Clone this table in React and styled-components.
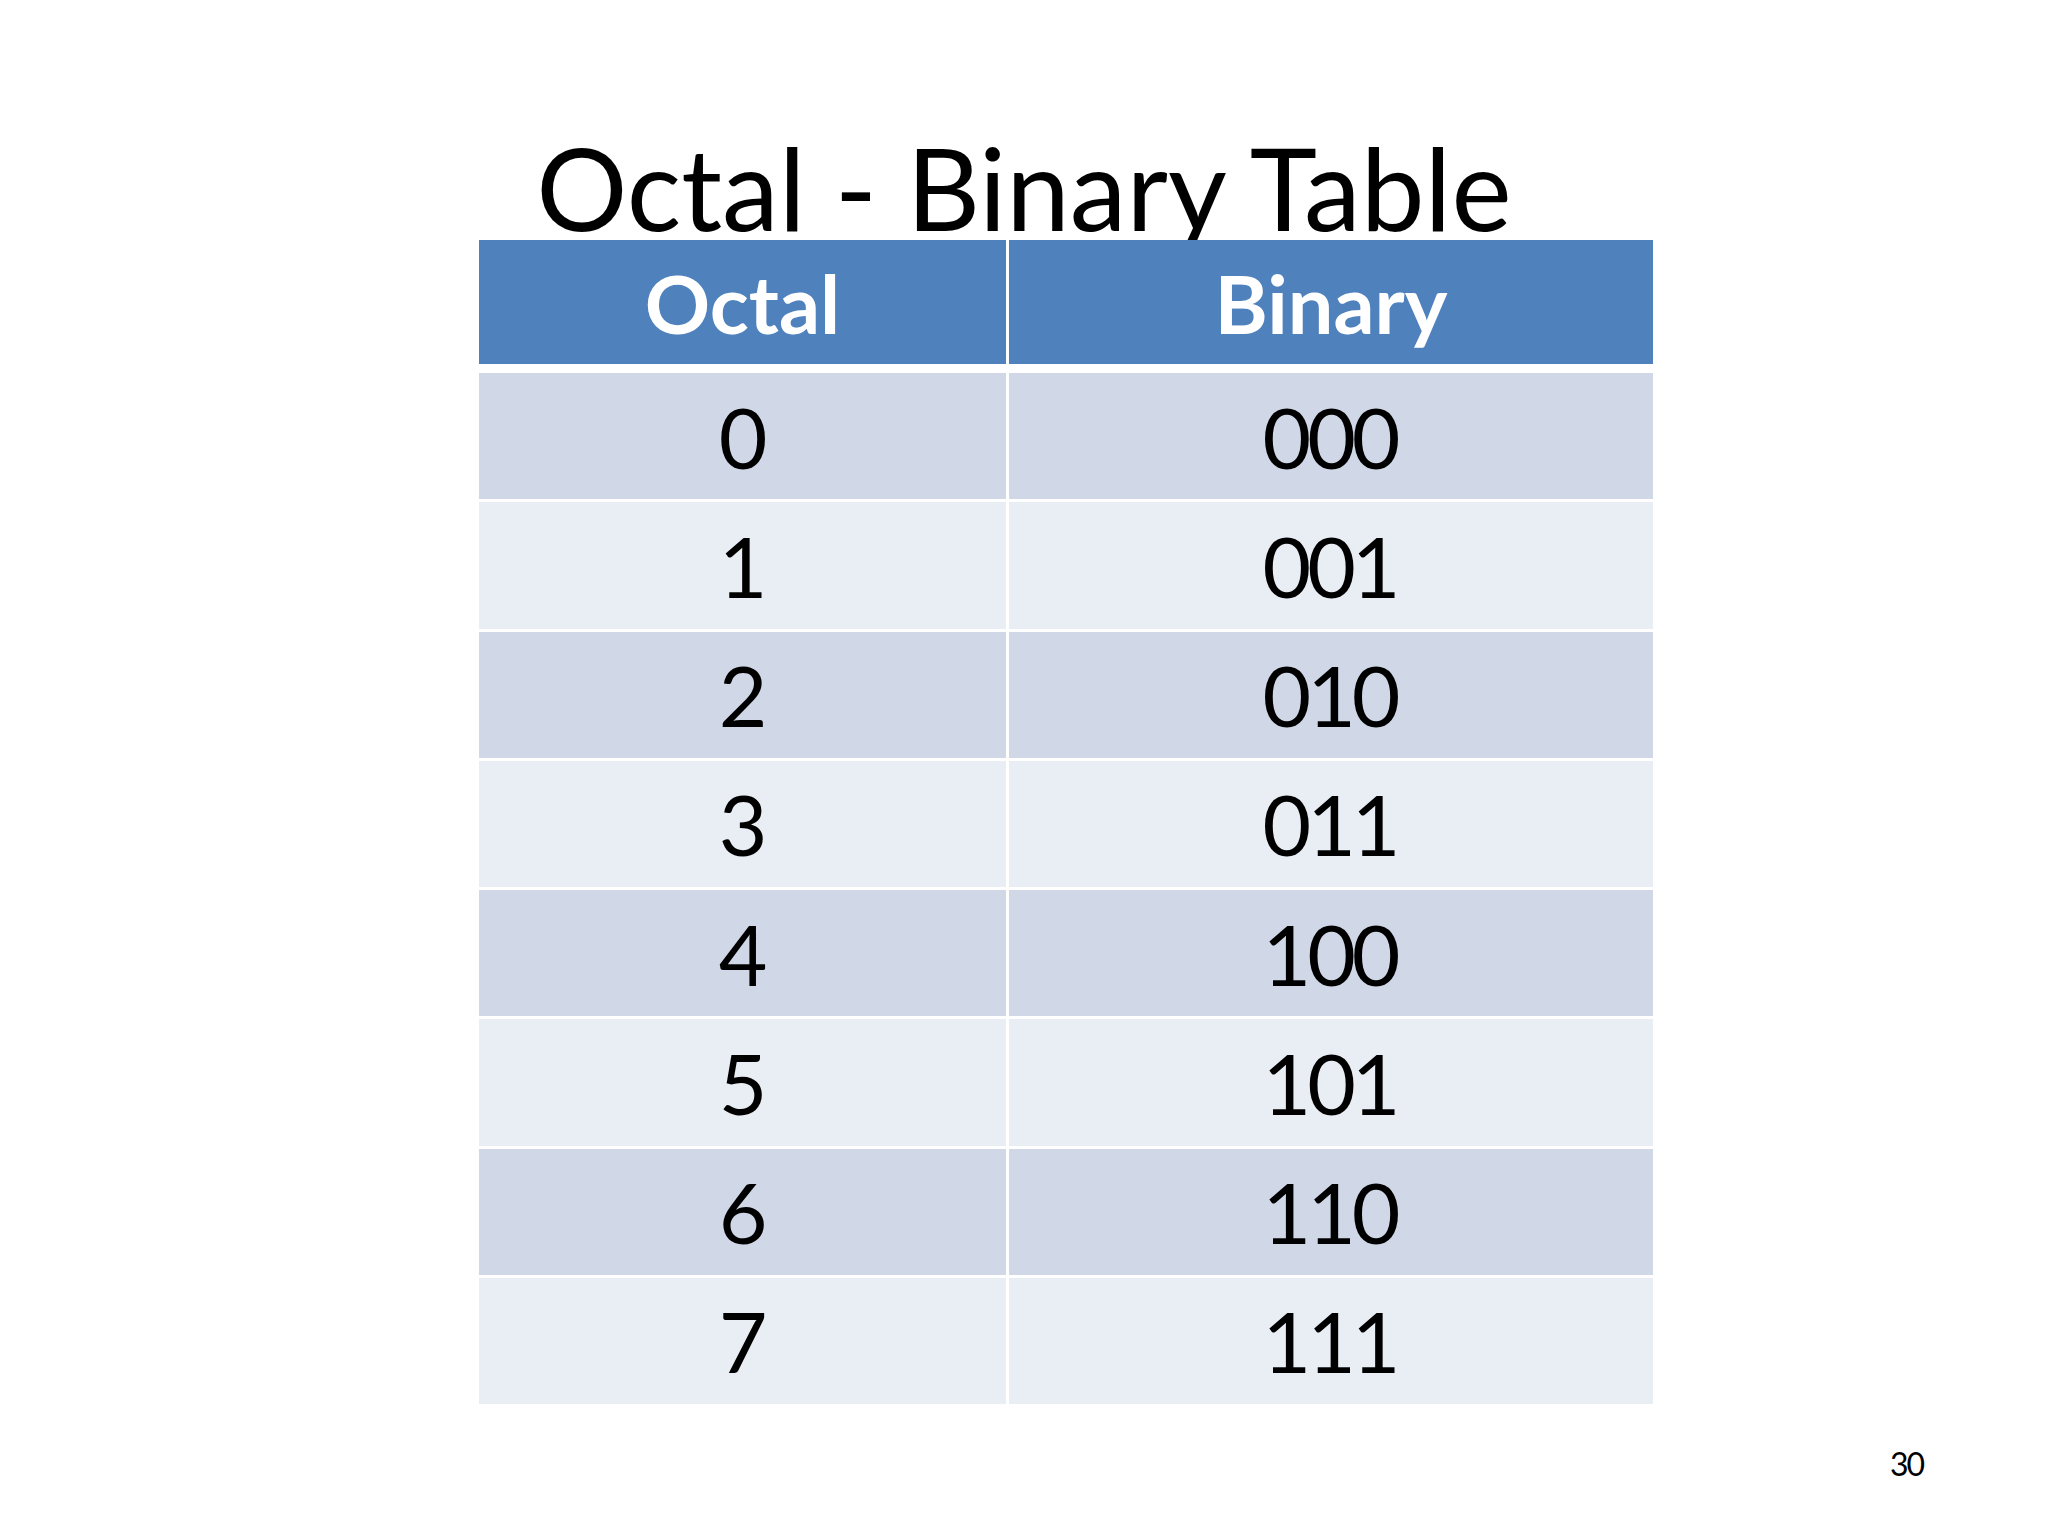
import styled, { createGlobalStyle } from "styled-components";

const GlobalStyle = createGlobalStyle`
  html, body {
    margin: 0;
    padding: 0;
    background: #ffffff;
  }
  body {
    font-family: Lato, "Open Sans", "Liberation Sans", sans-serif;
    color: #000000;
  }
`;

const Slide = styled.div`
  width: 2048px;
  height: 1536px;
  background: #ffffff;
  display: flex;
  flex-direction: column;
  overflow: hidden;
`;

const Titulo = styled.h1`
  margin: 134px 0 0 0;
  font-size: 114px;
  font-weight: normal;
  line-height: 106px;
  text-align: center;
`;

const Tabla = styled.div`
  margin-left: 479px;
  width: 1174px;
  display: grid;
  grid-template-columns: 527px 644px;
  column-gap: 3px;
  row-gap: 3px;
  background: #ffffff;
`;

const Cabecera = styled.div`
  height: 124px;
  margin-bottom: 6px;
  background: #4f81bd;
  color: #ffffff;
  font-size: 81px;
  font-weight: bold;
  letter-spacing: 0;
  display: flex;
  align-items: center;
  justify-content: center;
`;

const Celda = styled.div`
  height: 126.25px;
  background: ${(p) => (p.$par ? "#d0d8e8" : "#e9edf4")};
  font-size: 84px;
  letter-spacing: -4px;
  display: flex;
  align-items: center;
  justify-content: center;
  padding-right: 3px;
  box-sizing: border-box;
`;

const Pie = styled.div`
  margin-top: 40px;
  padding-right: 125px;
  text-align: right;
  font-size: 32px;
  letter-spacing: -2px;
`;

const filas = [
  ["0", "000"],
  ["1", "001"],
  ["2", "010"],
  ["3", "011"],
  ["4", "100"],
  ["5", "101"],
  ["6", "110"],
  ["7", "111"],
];

const App = () => {
  return (
    <Slide>
      <GlobalStyle />
      <Titulo>Octal - Binary Table</Titulo>
      <Tabla>
        <Cabecera>Octal</Cabecera>
        <Cabecera>Binary</Cabecera>
        {filas.map(([octal, binario], i) => [
          <Celda key={`o${i}`} $par={i % 2 === 0}>{octal}</Celda>,
          <Celda key={`b${i}`} $par={i % 2 === 0}>{binario}</Celda>,
        ])}
      </Tabla>
      <Pie>30</Pie>
    </Slide>
  );
};

export default App;
